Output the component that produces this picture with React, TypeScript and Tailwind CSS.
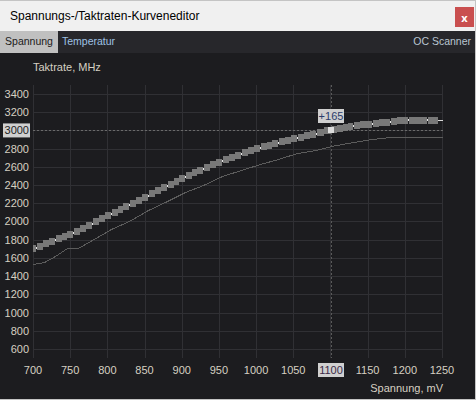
import React from "react";

const font = '"Liberation Sans", Arial, sans-serif';

// pixel geometry of the plot
const X0 = 33;
const XS = 37.18; // px per 50 mV
const Y0 = 94;
const YS = 18.21; // px per 200 MHz

const xTicks = [700, 750, 800, 850, 900, 950, 1000, 1050, 1100, 1150, 1200, 1250];
const yTicks = [3400, 3200, 3000, 2800, 2600, 2400, 2200, 2000, 1800, 1600, 1400, 1200, 1000, 800, 600];

// measured points of the main curve (dots between blocks)
const curve: [number, number][] = [
  [33, 249], [36, 248], [55, 240], [73, 233], [92, 224], [111, 214], [129, 205], [148, 196],
  [167, 186], [185, 177], [203, 169], [222, 161], [241, 154], [260, 148], [278, 143],
  [297, 138], [316, 134], [331, 130], [353, 126], [372, 124], [390, 122], [408, 120],
  [427, 120], [438, 120],
];

const thin: [number, number][] = [
  [33, 264], [44, 262], [55, 256], [67, 248], [78, 248], [92, 240], [111, 229], [129, 221],
  [148, 210], [167, 201], [185, 192], [203, 185], [222, 176], [241, 170], [260, 164],
  [278, 159], [297, 153], [316, 150], [331, 146], [353, 142], [372, 139], [390, 137], [442, 137],
];

// split each segment into small flat blocks, like the stepped raster of the original
function blocks() {
  const out: { x: number; y: number; w: number }[] = [];
  for (let i = 0; i < curve.length - 1; i++) {
    const [x, y] = curve[i];
    const [nx, ny] = curve[i + 1];
    const a = i === 0 ? x : x + 1;
    const b = i === curve.length - 2 ? nx : nx;
    const n = Math.max(1, Math.round((b - a) / 6));
    const step = (b - a) / n;
    for (let k = 0; k < n; k++) {
      const xs = Math.round(a + k * step);
      const xe = Math.round(a + (k + 1) * step);
      const mid = (xs + xe) / 2;
      const yc = y + ((ny - y) * (mid - x)) / (nx - x);
      out.push({ x: xs, y: Math.round(yc - 3.5), w: xe - xs });
    }
  }
  return out;
}

function TitleBar() {
  return (
    <div className="flex h-[31px] items-center justify-between bg-[#f0f0f0] pl-[10px] pr-[1px]">
      <span className="text-[12px] text-black" style={{ fontFamily: font }}>
        Spannungs-/Taktraten-Kurveneditor
      </span>
      <button className="mt-[2px] flex h-[20px] w-[19px] items-center justify-center bg-[#c94f4f] text-[11px] font-bold leading-none text-white">
        x
      </button>
    </div>
  );
}

function Tabs() {
  return (
    <div className="flex h-[22px] items-stretch bg-[#27272b] text-[10.5px]" style={{ fontFamily: font }}>
      <div className="flex w-[58px] items-center justify-center bg-[#c0c0c0] text-[#1a1a1a]">Spannung</div>
      <div className="flex items-center pl-[4px] text-[#9fc2e4]">Temperatur</div>
      <div className="ml-auto flex items-center pr-[4px] text-[#bac6d2]">OC Scanner</div>
    </div>
  );
}

function Chart() {
  const pts = (p: [number, number][]) => p.map(([x, y]) => `${x + 0.5},${y + 0.5}`).join(" ");
  return (
    <svg width={475} height={346} viewBox="0 53 475 346" className="block" style={{ fontFamily: font }}>
      <rect x={0} y={53} width={475} height={346} fill="#1c1c1f" />
      <text x={33} y={71} fontSize={11} fill="#d6d0c2">Taktrate, MHz</text>

      <g shapeRendering="crispEdges">
        {xTicks.map((t, i) => (
          <line key={t} x1={Math.round(X0 + i * XS) + 0.5} x2={Math.round(X0 + i * XS) + 0.5} y1={85} y2={358} stroke="#303034" strokeWidth={1} />
        ))}
        {yTicks.map((t, j) => (
          <line key={t} x1={33} x2={443} y1={Math.round(Y0 + j * YS) + 0.5} y2={Math.round(Y0 + j * YS) + 0.5} stroke="#303034" strokeWidth={1} />
        ))}

        {/* cursor crosshair */}
        <line x1={33} x2={443} y1={130.5} y2={130.5} stroke="#6a6a6a" strokeDasharray="2 2" />
        <line x1={331.5} x2={331.5} y1={85} y2={358} stroke="#5a5a5a" strokeDasharray="2 2" />

        <polyline points={pts(thin)} fill="none" stroke="#5c5c5c" strokeWidth={1} />

        {/* main curve */}
        {blocks().map((b, i) => (
          <rect key={i} x={b.x} y={b.y} width={b.w} height={7} fill="#787878" />
        ))}
        <line x1={438} x2={443} y1={120.5} y2={120.5} stroke="#d8d8d8" strokeWidth={1} />
        {curve.slice(1, -1).map(([x, y]) =>
          x === 331 ? null : <rect key={x} x={x} y={y - 1} width={1} height={2} fill="#e6e6e6" />
        )}
        <rect x={328} y={127} width={6} height={6} fill="#dcdcdc" />
      </g>

      {/* tooltip */}
      <rect x={318} y={109} width={26} height={14} fill="#cfcfcf" />
      <text x={331} y={120} fontSize={11} fill="#2b3c6c" textAnchor="middle">+165</text>

      {yTicks.map((t, j) => {
        const y = Y0 + j * YS;
        if (t === 3000) {
          return (
            <g key={t}>
              <rect x={3} y={y - 7} width={27} height={14} fill="#d0d0d0" />
              <text x={29} y={y + 4} fontSize={11} fill="#222" textAnchor="end">{t}</text>
            </g>
          );
        }
        return <text key={t} x={29} y={y + 4} fontSize={11} fill="#d6d0c2" textAnchor="end">{t}</text>;
      })}

      {xTicks.map((t, i) => {
        const x = X0 + i * XS;
        if (t === 1100) {
          return (
            <g key={t}>
              <rect x={318} y={363} width={26} height={14} fill="#d0d0d0" />
              <text x={331} y={374} fontSize={11} fill="#3b2a48" textAnchor="middle">{t}</text>
            </g>
          );
        }
        return <text key={t} x={x} y={374} fontSize={11} fill="#d6d0c2" textAnchor="middle">{t}</text>;
      })}

      <text x={443} y={392} fontSize={11} fill="#d6d0c2" textAnchor="end">Spannung, mV</text>
    </svg>
  );
}

export default function App() {
  return (
    <div className="h-[400px] w-[476px] overflow-hidden bg-white">
      <div className="flex h-[400px] w-[476px] flex-col border-t border-r border-b border-[#c4c4c4]">
        <TitleBar />
        <Tabs />
        <div className="flex-1 bg-[#1c1c1f]">
          <Chart />
        </div>
      </div>
    </div>
  );
}
